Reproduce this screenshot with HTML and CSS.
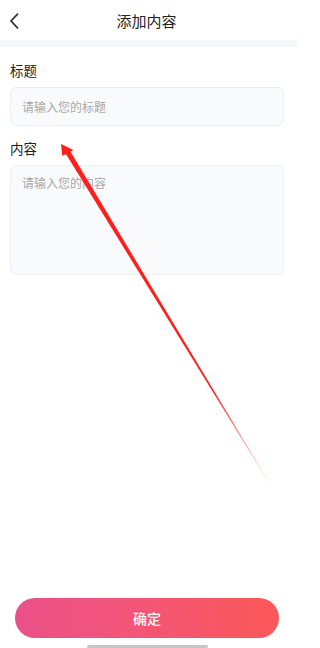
FILE: index.html
```html
<!DOCTYPE html>
<html lang="zh">
<head>
<meta charset="utf-8">
<link rel="stylesheet" href="styles.css">
</head>
<body>
<div class="page">
  <header class="nav">
    <svg class="back" width="10" height="16" viewBox="0 0 10 16"><path d="M8.5 1.2 L2 8 L8.5 14.8" fill="none" stroke="#333" stroke-width="1.8" stroke-linecap="round" stroke-linejoin="round"/></svg>
    <div class="title">添加内容</div>
  </header>
  <div class="band"></div>
  <main class="form">
    <div class="label">标题</div>
    <div class="input">请输入您的标题</div>
    <div class="label label2">内容</div>
    <div class="textarea">请输入您的内容</div>
  </main>
  <div class="spacer"></div>
  <div class="footer">
    <button class="btn">确定</button>
    <div class="home"></div>
  </div>
  <svg class="arrow" width="297" height="648" viewBox="0 0 297 648">
    <defs>
      <linearGradient id="fade" gradientUnits="userSpaceOnUse" x1="66" y1="153" x2="276" y2="494">
        <stop offset="0" stop-color="#ff1f1a" stop-opacity="1"/>
        <stop offset="0.7" stop-color="#ff1f1a" stop-opacity="1"/>
        <stop offset="1" stop-color="#ff1f1a" stop-opacity="0.1"/>
      </linearGradient>
    </defs>
    <polygon points="64.2,151.3 68.6,148.6 276,494" fill="url(#fade)"/>
    <polygon points="61,144 73.5,150 62.3,156" fill="#ff1f1a"/>
  </svg>
</div>
</body>
</html>
```

FILE: styles.css
```css
* { box-sizing: border-box; }
html, body { margin: 0; padding: 0; }
body {
  width: 297px;
  height: 648px;
  background: #fff;
  font-family: "Noto Sans CJK SC", "Noto Sans", sans-serif;
  color: #333;
  overflow: hidden;
}
.page {
  position: relative;
  height: 648px;
  display: flex;
  flex-direction: column;
}
.nav {
  position: relative;
  height: 40px;
  display: flex;
  align-items: center;
  justify-content: center;
  padding-right: 4px;
}
.back {
  position: absolute;
  left: 9px;
  top: 13px;
}
.title {
  font-size: 15px;
  color: #222;
  line-height: 20px;
  margin-top: 1px;
}
.band {
  height: 7px;
  background: #f5f6f9;
}
.form {
  padding: 13px 13px 0 10px;
  display: flex;
  flex-direction: column;
}
.label {
  font-size: 13.5px;
  line-height: 20px;
  color: #222;
  font-weight: 400;
}
.label2 { margin-top: 12px; }
.input {
  margin-top: 7px;
  height: 39px;
  border: 1px solid #eeeff2;
  border-radius: 6px;
  background: #f9fafc;
  font-size: 12px;
  color: #a8a8a8;
  padding-left: 11px;
  display: flex;
  align-items: center;
}
.textarea {
  margin-top: 7px;
  height: 110px;
  border: 1px solid #eeeff2;
  border-radius: 6px;
  background: #f9fafc;
  font-size: 12px;
  color: #a8a8a8;
  padding: 8px 0 0 11px;
  line-height: 18px;
}
.spacer { flex: 1; }
.footer {
  display: flex;
  flex-direction: column;
  align-items: center;
  padding-right: 3px;
}
.btn {
  width: 264px;
  height: 40px;
  border: none;
  border-radius: 20px;
  background: linear-gradient(90deg, #ea5088 0%, #f2557a 40%, #fa5858 100%);
  color: #fff;
  font-family: "Noto Sans CJK SC", sans-serif;
  font-size: 14px;
  font-weight: 500;
}
.home {
  margin-top: 7px;
  width: 121px;
  height: 3px;
  background: #c6c6c6;
  border-radius: 2px;
}
.arrow {
  position: absolute;
  left: 0;
  top: 0;
  pointer-events: none;
}
```
